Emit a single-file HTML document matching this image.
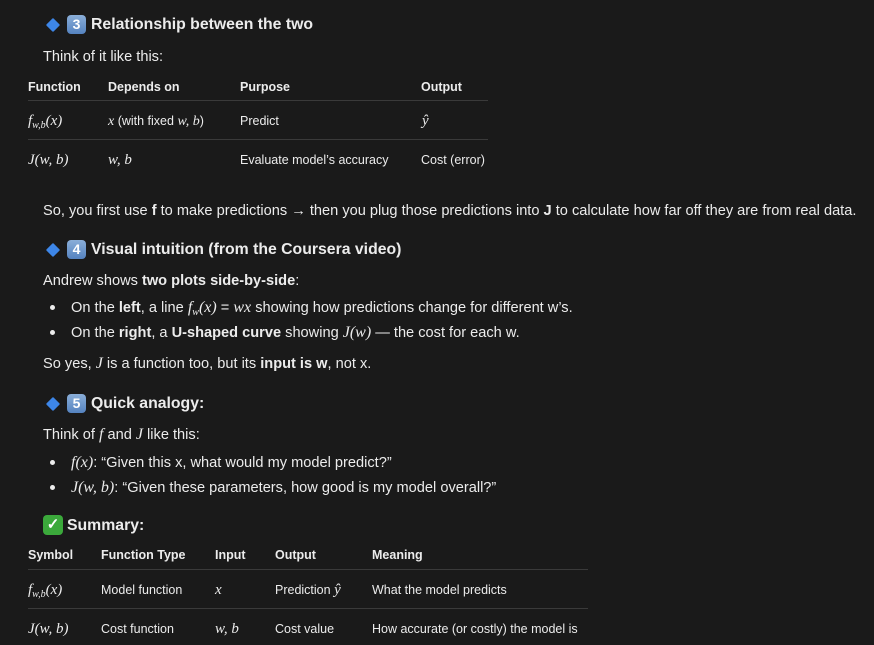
<!DOCTYPE html>
<html><head><meta charset="utf-8"><style>
body{margin:0;background:#1a1a1a;width:874px;height:645px;overflow:hidden;position:relative;color:#ececec;font-family:"Liberation Sans",sans-serif;}
.a{position:absolute;white-space:nowrap;line-height:18px;}
.p{font-size:14.6px;}
.h{font-size:15.8px;font-weight:bold;line-height:20px;}
.t{font-size:12.5px;}
.th{font-size:12.5px;font-weight:bold;}
.m{font-family:"Liberation Serif",serif;font-style:italic;font-size:16px;}
.tm{font-family:"Liberation Serif",serif;font-style:italic;font-size:15px;}
sub{font-size:10px;vertical-align:-3px;line-height:0}
.line{position:absolute;height:1px;background:#3a3a3a;}
.dia{position:absolute;width:10px;height:10px;background:#3d86e8;transform:rotate(45deg);border-radius:1px;}
.key{position:absolute;width:19px;height:19px;border-radius:4px;background:linear-gradient(#8aaed8,#5583c0);color:#fff;font-weight:bold;font-size:14px;text-align:center;line-height:19px;}
.chk{position:absolute;width:20px;height:20px;border-radius:4px;background:#3ba93b;color:#fff;font-weight:bold;font-size:15px;text-align:center;line-height:20px;}
.dot{position:absolute;width:5px;height:5px;border-radius:50%;background:#ececec;}
b{font-weight:bold}
</style></head><body>
<div class="dia" style="left:48px;top:20px"></div><div class="key" style="left:67px;top:15px">3</div>
<div class="a h" style="left:91px;top:15px">Relationship between the two</div>
<div class="a p" style="left:43px;top:48px">Think of it like this:</div>

<div class="a th" style="left:28px;top:78px">Function</div>
<div class="a th" style="left:108px;top:78px">Depends on</div>
<div class="a th" style="left:240px;top:78px">Purpose</div>
<div class="a th" style="left:421px;top:78px">Output</div>
<div class="line" style="left:28px;top:100px;width:460px"></div>
<div class="a tm" style="left:28px;top:112px">f<sub>w,b</sub>(x)</div>
<div class="a t" style="left:108px;top:112px"><span class="tm" style="font-size:14px">x</span> (with fixed <span class="tm" style="font-size:14px">w, b</span>)</div>
<div class="a t" style="left:240px;top:112px">Predict</div>
<div class="a tm" style="left:422px;top:112px">ŷ</div>
<div class="line" style="left:28px;top:139px;width:460px"></div>
<div class="a tm" style="left:28px;top:151px">J(w, b)</div>
<div class="a tm" style="left:108px;top:151px">w, b</div>
<div class="a t" style="left:240px;top:151px">Evaluate model’s accuracy</div>
<div class="a t" style="left:421px;top:151px">Cost (error)</div>

<div class="a p" style="left:43px;top:202px">So, you first use <b>f</b> to make predictions → then you plug those predictions into <b>J</b> to calculate how far off they are from real data.</div>

<div class="dia" style="left:48px;top:245px"></div><div class="key" style="left:67px;top:240px">4</div>
<div class="a h" style="left:91px;top:240px">Visual intuition (from the Coursera video)</div>
<div class="a p" style="left:43px;top:272px">Andrew shows <b>two plots side-by-side</b>:</div>
<div class="dot" style="left:50px;top:305px"></div>
<div class="a p" style="left:71px;top:299px">On the <b>left</b>, a line <span class="m">f<sub>w</sub>(x)</span> = <span class="m">wx</span> showing how predictions change for different w’s.</div>
<div class="dot" style="left:50px;top:330px"></div>
<div class="a p" style="left:71px;top:324px">On the <b>right</b>, a <b>U-shaped curve</b> showing <span class="m">J(w)</span> — the cost for each w.</div>
<div class="a p" style="left:43px;top:355px">So yes, <span class="m">J</span> is a function too, but its <b>input is w</b>, not x.</div>

<div class="dia" style="left:48px;top:399px"></div><div class="key" style="left:67px;top:394px">5</div>
<div class="a h" style="left:91px;top:394px">Quick analogy:</div>
<div class="a p" style="left:43px;top:426px">Think of <span class="m">f</span> and <span class="m">J</span> like this:</div>
<div class="dot" style="left:50px;top:460px"></div>
<div class="a p" style="left:71px;top:454px"><span class="m">f(x)</span>: “Given this x, what would my model predict?”</div>
<div class="dot" style="left:50px;top:485px"></div>
<div class="a p" style="left:71px;top:479px"><span class="m">J(w, b)</span>: “Given these parameters, how good is my model overall?”</div>

<div class="chk" style="left:43px;top:515px">✓</div>
<div class="a h" style="left:67px;top:516px">Summary:</div>
<div class="a th" style="left:28px;top:546px">Symbol</div>
<div class="a th" style="left:101px;top:546px">Function Type</div>
<div class="a th" style="left:215px;top:546px">Input</div>
<div class="a th" style="left:275px;top:546px">Output</div>
<div class="a th" style="left:372px;top:546px">Meaning</div>
<div class="line" style="left:28px;top:569px;width:560px"></div>
<div class="a tm" style="left:28px;top:581px">f<sub>w,b</sub>(x)</div>
<div class="a t" style="left:101px;top:581px">Model function</div>
<div class="a tm" style="left:215px;top:581px">x</div>
<div class="a t" style="left:275px;top:581px">Prediction <span class="tm">ŷ</span></div>
<div class="a t" style="left:372px;top:581px">What the model predicts</div>
<div class="line" style="left:28px;top:608px;width:560px"></div>
<div class="a tm" style="left:28px;top:620px">J(w, b)</div>
<div class="a t" style="left:101px;top:620px">Cost function</div>
<div class="a tm" style="left:215px;top:620px">w, b</div>
<div class="a t" style="left:275px;top:620px">Cost value</div>
<div class="a t" style="left:372px;top:620px">How accurate (or costly) the model is</div>
</body></html>
